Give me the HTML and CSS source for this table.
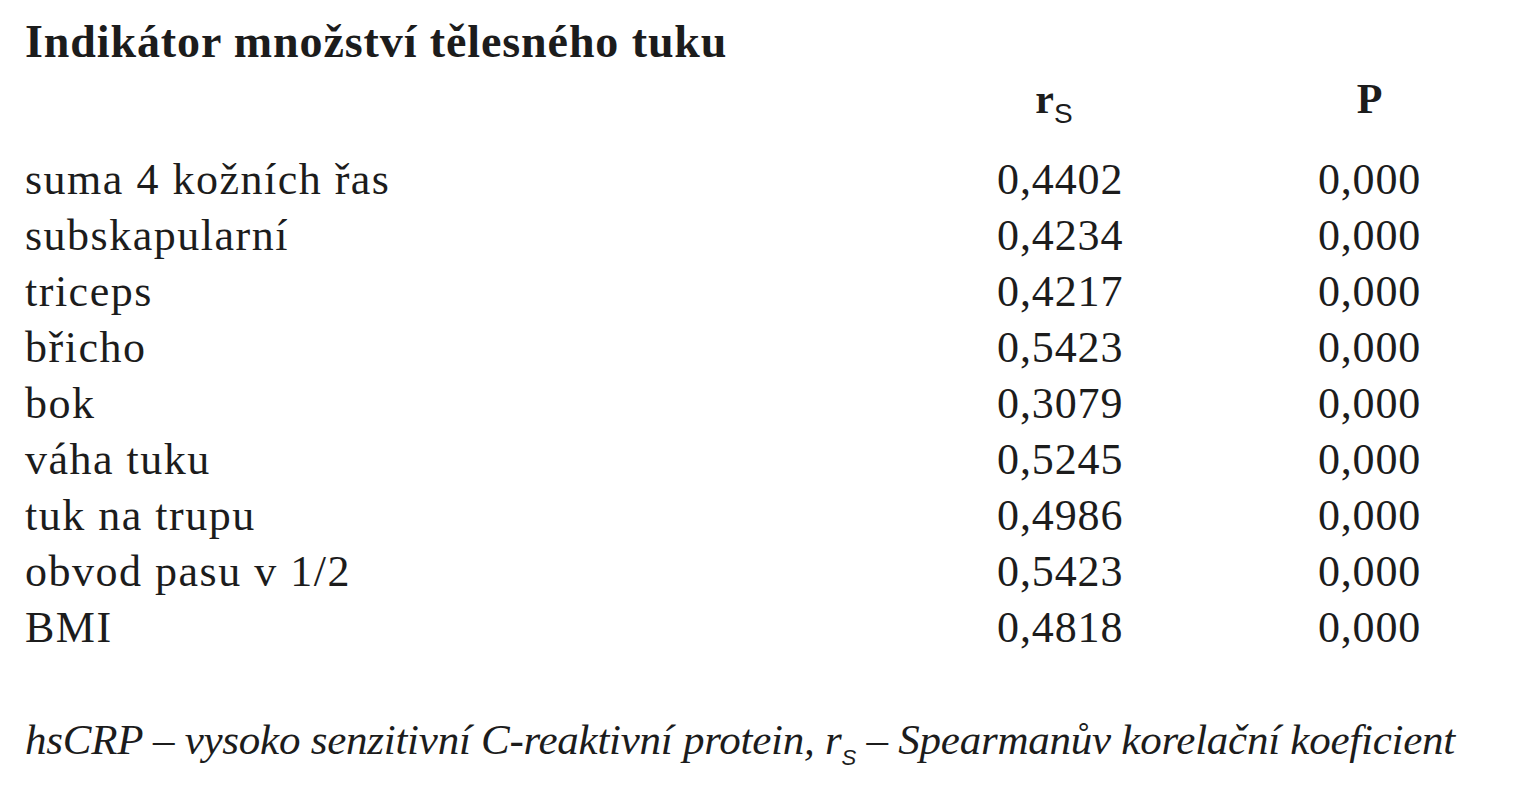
FILE: index.html
```html
<!DOCTYPE html>
<html lang="cs">
<head>
<meta charset="utf-8">
<title>Indikátor množství tělesného tuku</title>
<link rel="stylesheet" href="styles.css">
</head>
<body>
<div class="page">
  <h1 class="title">Indikátor množství tělesného tuku</h1>
  <div class="row head">
    <div class="label"></div>
    <div class="rs">r<sub>S</sub></div>
    <div class="p">P</div>
  </div>
  <div class="rows">
    <div class="row"><div class="label">suma 4 kožních řas</div><div class="rs">0,4402</div><div class="p">0,000</div></div>
    <div class="row"><div class="label">subskapularní</div><div class="rs">0,4234</div><div class="p">0,000</div></div>
    <div class="row"><div class="label">triceps</div><div class="rs">0,4217</div><div class="p">0,000</div></div>
    <div class="row"><div class="label">břicho</div><div class="rs">0,5423</div><div class="p">0,000</div></div>
    <div class="row"><div class="label">bok</div><div class="rs">0,3079</div><div class="p">0,000</div></div>
    <div class="row"><div class="label">váha tuku</div><div class="rs">0,5245</div><div class="p">0,000</div></div>
    <div class="row"><div class="label">tuk na trupu</div><div class="rs">0,4986</div><div class="p">0,000</div></div>
    <div class="row"><div class="label">obvod pasu v 1/2</div><div class="rs">0,5423</div><div class="p">0,000</div></div>
    <div class="row"><div class="label">BMI</div><div class="rs">0,4818</div><div class="p">0,000</div></div>
  </div>
  <p class="note">hsCRP – vysoko senzitivní C-reaktivní protein, r<sub>S</sub> – Spearmanův korelační koeficient</p>
</div>
</body>
</html>
```

FILE: styles.css
```css
html, body {
  margin: 0;
  padding: 0;
  background: #ffffff;
}

.page {
  padding: 14px 0 0 25px;
  font-family: "Liberation Serif", "DejaVu Serif", serif;
  color: #1c1c1c;
}

.title {
  margin: 0;
  font-size: 46px;
  font-weight: bold;
  line-height: 56px;
  height: 57px;
  letter-spacing: 0.9px;
}

.row {
  display: flex;
  height: 56px;
  line-height: 56px;
  font-size: 44px;
  white-space: nowrap;
}

.row.head {
  font-size: 42px;
  font-weight: bold;
}

.rows {
  margin-top: 25px;
}

.label {
  width: 972px;
  letter-spacing: 1.5px;
}

.rs {
  width: 126px;
  letter-spacing: 0.9px;
}

.p {
  width: 103px;
  margin-left: 195px;
  letter-spacing: 0.8px;
}

.head .rs,
.head .p {
  text-align: center;
  letter-spacing: 0;
}

.head .rs {
  padding-right: 12px;
  box-sizing: border-box;
}

.head sub {
  font-weight: normal;
  font-family: "Liberation Sans", sans-serif;
  font-size: 28px;
  line-height: 0;
  vertical-align: -10px;
}

.note {
  margin: 56px 0 0 0;
  font-size: 43px;
  line-height: 56px;
  font-style: italic;
  white-space: nowrap;
  letter-spacing: -0.25px;
}

.note sub {
  font-size: 22px;
  line-height: 0;
  vertical-align: -11px;
  font-family: "Liberation Sans", sans-serif;
  letter-spacing: 0;
}
```
